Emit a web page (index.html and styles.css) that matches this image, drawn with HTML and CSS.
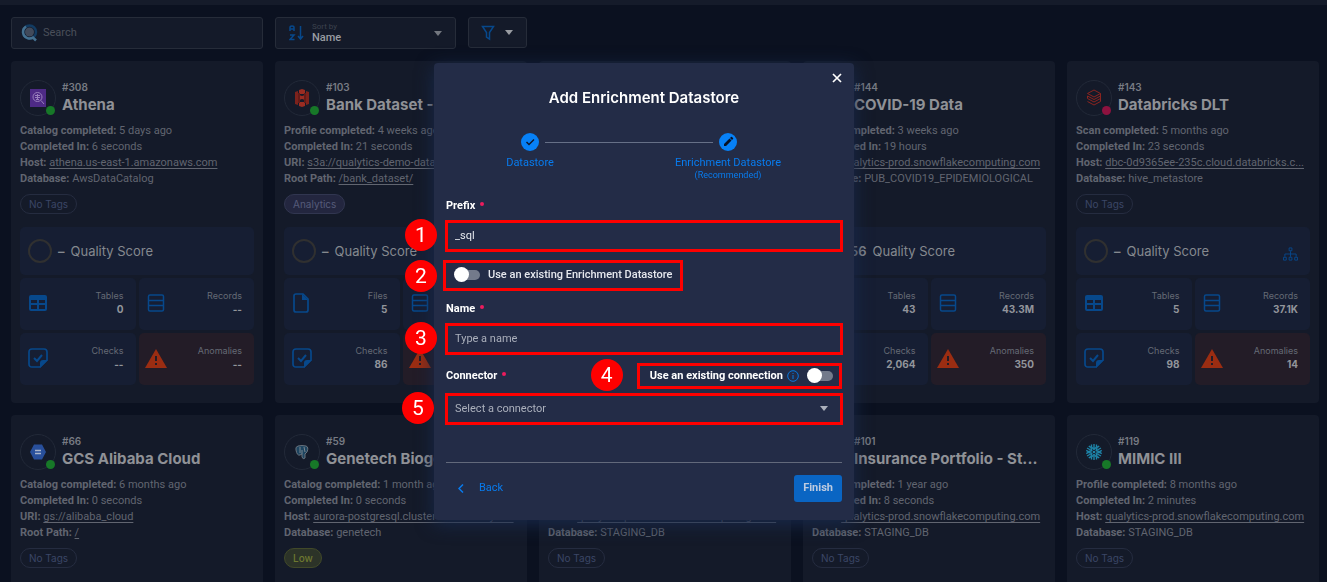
FILE: index.html
```html
<!DOCTYPE html>
<html lang="en">
<head>
<meta charset="utf-8">
<title>Add Enrichment Datastore</title>
<link rel="stylesheet" href="styles.css">
</head>
<body>
<svg class="defs" aria-hidden="true">
  <symbol id="table" viewBox="0 0 20 18"><path fill="currentColor" fill-rule="evenodd" d="M3 1h14a2 2 0 0 1 2 2v12a2 2 0 0 1-2 2H3a2 2 0 0 1-2-2V3a2 2 0 0 1 2-2zM3 6v3h6V6zm8 0v3h6V6zM3 11v4h6v-4zm8 0v4h6v-4z"/></symbol>
  <symbol id="rows" viewBox="0 0 20 20"><path fill="none" stroke="currentColor" stroke-width="1.500" d="M3 2h12q1.500 0 1.500 1.500v13q0 1.500-1.500 1.500H3q-1.500 0-1.500-1.500v-13Q1.500 2 3 2zM1.500 7.500h15M1.500 12.500h15"/></symbol>
  <symbol id="file" viewBox="0 0 20 20"><path fill="none" stroke="currentColor" stroke-width="1.700" d="M4 1h7l5 5v11q0 2-2 2H4q-2 0-2-2V3q0-2 2-2z"/><path fill="currentColor" d="M10 1l6 6h-6z"/></symbol>
  <symbol id="check" viewBox="0 0 20 20"><path fill="none" stroke="currentColor" stroke-width="1.700" d="M4 1h12q3 0 3 3v8l-7 7H4q-3 0-3-3V4q0-3 3-3z"/><path fill="currentColor" d="M12 20v-5q0-3 3-3h5z"/><path fill="none" stroke="currentColor" stroke-width="2" d="M6 10l3 3 5-6"/></symbol>
  <symbol id="warn" viewBox="0 0 22 19"><path fill="currentColor" d="M11 0l11 19H0z"/><path stroke="#231c27" stroke-width="2" d="M11 7v5M11 14v2"/></symbol>
  <symbol id="tree" viewBox="0 0 16 14"><path fill="none" stroke="currentColor" d="M6.500.5h3v3h-3zM.5 10.500h3v3h-3zM6.500 10.500h3v3h-3zM12.500 10.500h3v3h-3zM8 4v6M2 10V7h12v3"/></symbol>
  <symbol id="snow" viewBox="0 0 18 18"><g fill="none" stroke="#1e84a8" stroke-width="1.400"><path d="M9 8L10 9 9 10 8 9z" stroke-width="1"/><g id="arm"><path d="M9 1v4M6.500 1.500v2.500L9 6.500 11.500 4V1.500"/></g><use href="#arm" transform="rotate(60 9 9)"/><use href="#arm" transform="rotate(120 9 9)"/><use href="#arm" transform="rotate(180 9 9)"/><use href="#arm" transform="rotate(240 9 9)"/><use href="#arm" transform="rotate(300 9 9)"/></g></symbol>
</svg>

<header class="topbar"></header>
<main class="page">
  <div class="toolbar">
    <label class="search">
      <svg width="18" height="20" viewBox="0 0 18 20"><circle cx="8.500" cy="9" r="4.500" fill="#414a5b"/><circle cx="8.500" cy="9" r="6.500" fill="none" stroke="#123b62" stroke-width="2.500"/><path d="M5 3.500a6.500 6.500 0 1 0 7 11l3 3" fill="none" stroke="#45708f" stroke-width="2.500"/></svg>
      <input type="search" placeholder="Search" aria-label="Search">
    </label>
    <div class="sort">
      <svg width="15" height="16" viewBox="0 0 15 16" fill="none" stroke="#07488b" stroke-width="1.500"><path d="M1 6V2.500Q1 1 3 1t2 1.500V6M1 4h4M1 10h4L1 14.500h4.500M11.500 1v12M9 11l2.500 3 2.500-3"/></svg>
      <div class="sort-text"><label for="sort">Sort by</label><select id="sort"><option>Name</option></select></div>
      <i class="caret"></i>
    </div>
    <button class="filter" aria-label="Filter"><svg width="14" height="16" viewBox="0 0 14 16" fill="none" stroke="#07488b" stroke-width="1.500"><path d="M1.500 1.500h11L8.500 7.500v6.500l-3-2V7.500z"/></svg><i class="caret"></i></button>
  </div>

  <div class="grid">
    <article class="card">
      <div class="head"><div class="logo"><svg width="16" height="18" viewBox="0 0 16 18"><path fill="#4e2a86" d="M0 0h16v18H0z"/><g fill="none" stroke="#9a80bd"><circle cx="7.500" cy="8" r="4.500"/><path d="M5 6.500h5M5 8.500h5M6 10.500h3M7.500 5v6M11 11.500l3 3.500" /></g></svg><span class="dot"></span></div><div class="name"><small>#308</small><h2>Athena</h2></div></div>
      <div class="meta"><p><b>Catalog completed:</b> 5 days ago</p><p><b>Completed In:</b> 6 seconds</p><p><b>Host:</b> <a href="#">athena.us-east-1.amazonaws.com</a></p><p><b>Database:</b> AwsDataCatalog</p></div>
      <span class="chip">No Tags</span>
      <div class="quality"><i class="ring"></i><span class="score">–</span><span>Quality Score</span></div>
      <div class="stats">
        <div class="stat"><svg width="20" height="18"><use href="#table"/></svg><div><span>Tables</span><b>0</b></div></div>
        <div class="stat"><svg width="20" height="20"><use href="#rows"/></svg><div><span>Records</span><b>--</b></div></div>
        <div class="stat"><svg width="20" height="20"><use href="#check"/></svg><div><span>Checks</span><b>--</b></div></div>
        <div class="stat alert"><svg width="22" height="19"><use href="#warn"/></svg><div><span>Anomalies</span><b>--</b></div></div>
      </div>
    </article>
    <article class="card">
      <div class="head"><div class="logo"><svg width="16" height="20" viewBox="0 0 16 20"><path fill="#7d221c" d="M1 4l3-1v14l-3-1zM12 3l3 1v12l-3 1z"/><path fill="#9a2c22" d="M5 2l3-1 3 1v4H5zM5 7l3 1 3-1v5l-3-1-3 1zM5 14h6v4l-3 1-3-1z"/><path fill="#641b18" d="M4 5h2v10H4zM10 5h2v10h-2z"/></svg><span class="dot"></span></div><div class="name"><small>#103</small><h2>Bank Dataset - S3</h2></div></div>
      <div class="meta"><p><b>Profile completed:</b> 4 weeks ago</p><p><b>Completed In:</b> 21 seconds</p><p><b>URI:</b> <a href="#">s3a://qualytics-demo-data</a></p><p><b>Root Path:</b> <a href="#">/bank_dataset/</a></p></div>
      <span class="chip analytics">Analytics</span>
      <div class="quality"><i class="ring"></i><span class="score">–</span><span>Quality Score</span></div>
      <div class="stats">
        <div class="stat"><svg width="20" height="20"><use href="#file"/></svg><div><span>Files</span><b>5</b></div></div>
        <div class="stat"><svg width="20" height="20"><use href="#rows"/></svg></div>
        <div class="stat"><svg width="20" height="20"><use href="#check"/></svg><div><span>Checks</span><b>86</b></div></div>
        <div class="stat alert"><svg width="22" height="19"><use href="#warn"/></svg></div>
      </div>
    </article>
    <article class="card"></article>
    <article class="card">
      <div class="head"><div class="logo"><span class="dot"></span></div><div class="name"><small>#144</small><h2>COVID-19 Data</h2></div></div>
      <div class="meta"><p><b>Scan completed:</b> 3 weeks ago</p><p><b>Completed In:</b> 19 hours</p><p><b>Host:</b> <a href="#">qualytics-prod.snowflakecomputing.com</a></p><p><b>Database:</b> PUB_COVID19_EPIDEMIOLOGICAL</p></div>
      <span class="chip hidden">Tag</span>
      <div class="quality"><i class="ring"></i><span class="score">56</span><span>Quality Score</span></div>
      <div class="stats">
        <div class="stat"><svg width="20" height="18"><use href="#table"/></svg><div><span>Tables</span><b>43</b></div></div>
        <div class="stat"><svg width="20" height="20"><use href="#rows"/></svg><div><span>Records</span><b>43.3M</b></div></div>
        <div class="stat"><svg width="20" height="20"><use href="#check"/></svg><div><span>Checks</span><b>2,064</b></div></div>
        <div class="stat alert"><svg width="22" height="19"><use href="#warn"/></svg><div><span>Anomalies</span><b>350</b></div></div>
      </div>
    </article>
    <article class="card">
      <div class="head"><div class="logo"><svg width="16" height="18" viewBox="0 0 16 18" fill="none" stroke="#8b241f"><path d="M8 1l6.500 3.500L8 8 1.500 4.500zM1.500 7L8 10.500 14.500 7M1.500 9.500L8 13l6.500-3.500M1.500 12.500L8 16l6.500-3.500M1.500 7v2.500M14.500 4.500v8"/></svg><span class="dot red"></span></div><div class="name"><small>#143</small><h2>Databricks DLT</h2></div></div>
      <div class="meta"><p><b>Scan completed:</b> 5 months ago</p><p><b>Completed In:</b> 23 seconds</p><p><b>Host:</b> <a href="#">dbc-0d9365ee-235c.cloud.databricks.c...</a></p><p><b>Database:</b> hive_metastore</p></div>
      <span class="chip">No Tags</span>
      <div class="quality"><i class="ring"></i><span class="score">–</span><span>Quality Score</span><svg class="tree" width="15" height="14"><use href="#tree"/></svg></div>
      <div class="stats">
        <div class="stat"><svg width="20" height="18"><use href="#table"/></svg><div><span>Tables</span><b>5</b></div></div>
        <div class="stat"><svg width="20" height="20"><use href="#rows"/></svg><div><span>Records</span><b>37.1K</b></div></div>
        <div class="stat"><svg width="20" height="20"><use href="#check"/></svg><div><span>Checks</span><b>98</b></div></div>
        <div class="stat alert"><svg width="22" height="19"><use href="#warn"/></svg><div><span>Anomalies</span><b>14</b></div></div>
      </div>
    </article>

    <article class="card">
      <div class="head"><div class="logo"><svg width="16" height="16" viewBox="0 0 16 16"><path fill="#284f9b" d="M4 .5h8L16 8l-4 7.500H4L0 8z"/><path stroke="#a9b5cb" stroke-width="1.500" d="M5 6.500h6M5 9.500h6"/></svg><span class="dot"></span></div><div class="name"><small>#66</small><h2>GCS Alibaba Cloud</h2></div></div>
      <div class="meta"><p><b>Catalog completed:</b> 6 months ago</p><p><b>Completed In:</b> 0 seconds</p><p><b>URI:</b> <a href="#">gs://alibaba_cloud</a></p><p><b>Root Path:</b> <a href="#">/</a></p></div>
      <span class="chip">No Tags</span>
    </article>
    <article class="card">
      <div class="head"><div class="logo"><svg width="14" height="15" viewBox="0 0 14 15"><path d="M3 1q4-1 8 0 3 1 1 6l-2 2v4q-2 2-3-1V9L5 10Q2 11 1 5 0 2 3 1z" fill="#1d4460" stroke="#69737d"/><path d="M5 2v6M9 2l1 5M7 9V5" fill="none" stroke="#7b858d"/></svg><span class="dot"></span></div><div class="name"><small>#59</small><h2>Genetech Biogen</h2></div></div>
      <div class="meta"><p><b>Catalog completed:</b> 1 month ago</p><p><b>Completed In:</b> 0 seconds</p><p><b>Host:</b> <a href="#">aurora-postgresql.cluster-cthoaoxeayrd...</a></p><p><b>Database:</b> genetech</p></div>
      <span class="chip low">Low</span>
    </article>
    <article class="card">
      <div class="head"><div class="logo"></div></div>
      <div class="meta"><p>&nbsp;</p><p>&nbsp;</p><p><b>Host:</b> <a href="#">qualytics-prod.snowflakecomputing.com</a></p><p><b>Database:</b> STAGING_DB</p></div>
      <span class="chip">No Tags</span>
    </article>
    <article class="card">
      <div class="head"><div class="logo"><span class="dot"></span></div><div class="name"><small>#101</small><h2>Insurance Portfolio - St...</h2></div></div>
      <div class="meta"><p><b>Scan completed:</b> 1 year ago</p><p><b>Completed In:</b> 8 seconds</p><p><b>Host:</b> <a href="#">qualytics-prod.snowflakecomputing.com</a></p><p><b>Database:</b> STAGING_DB</p></div>
      <span class="chip">No Tags</span>
    </article>
    <article class="card">
      <div class="head"><div class="logo"><svg width="18" height="18"><use href="#snow"/></svg><span class="dot"></span></div><div class="name"><small>#119</small><h2>MIMIC III</h2></div></div>
      <div class="meta"><p><b>Profile completed:</b> 8 months ago</p><p><b>Completed In:</b> 2 minutes</p><p><b>Host:</b> <a href="#">qualytics-prod.snowflakecomputing.com</a></p><p><b>Database:</b> STAGING_DB</p></div>
      <span class="chip">No Tags</span>
    </article>
  </div>
</main>

<div class="overlay">
  <form class="modal" role="dialog" aria-labelledby="title">
    <button type="button" class="close" aria-label="Close"><svg width="10" height="10" viewBox="0 0 10 10"><path d="M1 1l8 8M9 1L1 9" stroke="#fff" stroke-width="1.700"/></svg></button>
    <h1 id="title">Add Enrichment Datastore</h1>
    <div class="steps">
      <div class="step"><svg width="18" height="18" viewBox="0 0 18 18"><circle cx="9" cy="9" r="9" fill="#0781f7"/><path d="M5.500 9l2.500 2.500 5-5" fill="none" stroke="#10182c" stroke-width="1.500"/></svg><span>Datastore</span></div>
      <div class="step"><svg width="18" height="18" viewBox="0 0 18 18"><circle cx="9" cy="9" r="9" fill="#0781f7"/><path d="M5 13v-2l5.500-5.500 2 2L7 13zM11 5l1-1q.5-.5 1 0l1 1q.5.5 0 1l-1 1z" fill="#071226"/></svg><span>Enrichment Datastore</span><small>(Recommended)</small></div>
    </div>
    <label class="label" for="prefix">Prefix<i></i></label>
    <div class="field"><input id="prefix" type="text" value="_sql"><em class="mark">1</em></div>
    <div class="existing"><label><input class="toggle" type="checkbox">Use an existing Enrichment Datastore</label><em class="mark">2</em></div>
    <label class="label" for="dsname">Name<i></i></label>
    <div class="field"><input id="dsname" type="text" placeholder="Type a name"><em class="mark">3</em></div>
    <div class="connector">
      <label class="label" for="connector">Connector<i></i></label>
      <div class="connection"><label for="conn">Use an existing connection</label><svg width="12" height="12" viewBox="0 0 12 12" fill="none" stroke="#0878df"><circle cx="6" cy="6" r="5.300"/><path d="M6 5v4M6 3v1"/></svg><input id="conn" class="toggle" type="checkbox"><em class="mark">4</em></div>
    </div>
    <div class="field"><select id="connector"><option>Select a connector</option></select><i class="caret"></i><em class="mark five">5</em></div>
    <footer><button type="button" class="back"><svg width="6" height="9" viewBox="0 0 6 9"><path d="M5 .5l-4 4 4 4" fill="none" stroke="currentColor" stroke-width="1.500"/></svg>Back</button><button type="button" class="finish">Finish</button></footer>
  </form>
</div>
</body>
</html>
```
FILE: styles.css
```css
* { box-sizing: border-box; }
body { margin: 0; display: flex; flex-direction: column; height: 100vh; overflow: hidden; background: #0b1120; color: #616570; font: 11px/16px Roboto, "Liberation Sans", sans-serif; }
h1, h2, p { margin: 0; }
button, input, select { font: inherit; color: inherit; background: none; border: 0; padding: 0; margin: 0; appearance: none; outline: 0; }
svg { display: block; flex: none; }
.defs { position: absolute; width: 0; height: 0; }
.topbar { flex: none; height: 5px; background: #151b2a; }
.page { flex: 1; min-height: 0; overflow: hidden; padding: 12px 8px 0 11px; }
.toolbar { display: flex; gap: 12px; align-items: flex-start; height: 44px; }
.search, .sort, .filter { display: flex; align-items: center; height: 32px; background: #141a29; border: 1px solid #262c39; border-radius: 3px; }
.search { width: 252px; padding: 0 9px; gap: 4px; }
.search input { flex: 1; min-width: 0; }
.search input::placeholder { color: #4a4f5a; opacity: 1; }
.sort { position: relative; width: 181px; padding: 0 13px; gap: 8px; }
.sort-text { flex: 1; display: flex; flex-direction: column; }
.sort-text label { font-size: 8px; line-height: 9px; color: #3c424e; }
.sort-text select { color: #999ca2; font-weight: 500; line-height: 14px; height: 14px; }
.caret { flex: none; border: 4px solid transparent; border-top: 5px solid #73777f; border-bottom: 0; }
.filter { width: 59px; height: 31px; padding: 0 12px; gap: 10px; }
.filter .caret { border-top-color: #999ca2; }

.grid { display: grid; grid-template-columns: repeat(5, minmax(0, 1fr)); gap: 12px; }
.card { min-height: 342px; padding: 19px 9px 18px; background: #141a29; border-radius: 4px; }
.head { display: flex; gap: 6px; height: 43px; }
.logo { position: relative; display: grid; place-items: center; width: 36px; height: 36px; border: 1px solid #222938; border-radius: 50%; }
.dot { position: absolute; right: 0; bottom: 0; width: 9px; height: 9px; border-radius: 50%; background: #177828; }
.dot.red { background: #8e123f; }
.name { min-width: 0; white-space: nowrap; font-family: Inter, sans-serif; }
.name small { display: block; font-size: 10px; font-weight: 600; line-height: 14px; color: #777b83; }
.name h2 { font-size: 15px; line-height: 22px; font-weight: 700; color: #8f9196; }
.meta { margin-bottom: 7px; }
.meta p { white-space: nowrap; }
.meta b { font-weight: 700; }
.meta a { color: inherit; text-underline-offset: 2px; }
.chip { display: inline-flex; align-items: center; height: 20px; padding: 0 8px; border: 1px solid #252c40; border-radius: 10px; color: #3b4666; font: 10px/16px Inter, sans-serif; vertical-align: top; }
.chip.analytics { background: #23263f; border-color: #313650; color: #565b7a; }
.chip.low { background: #2c3328; border-color: #414929; color: #6d7830; font-weight: 500; }
.chip.hidden { visibility: hidden; }
.quality { display: flex; align-items: center; height: 48px; margin-top: 13px; padding: 0 12px 0 8px; border-radius: 5px; background: #161e33; color: #85898f; font: 13px/16px Inter, sans-serif; }
.ring { width: 24px; height: 24px; margin-right: 6px; border: 2px solid #303030; border-radius: 50%; }
.score { margin-right: 6px; font-weight: 600; }
.tree { margin-left: auto; margin-top: 6px; color: #07488b; }
.stats { display: grid; grid-template-columns: 1fr 1fr; gap: 3px; margin-top: 3px; font-family: Inter, sans-serif; }
.stat { display: flex; align-items: center; justify-content: space-between; height: 52px; padding: 0 12px 2px 8px; border-radius: 5px; background: #161e33; color: #07488b; }
.stat div { text-align: right; }
.stat span { display: block; color: #656a75; font-size: 9px; line-height: 12px; }
.stat b { display: block; color: #92959b; font-size: 10px; line-height: 14px; }
.stat.alert { background: #231c27; color: #9b2d12; padding-left: 6px; }

.overlay { position: fixed; inset: 0; display: flex; align-items: center; justify-content: center; padding-right: 39px; }
.modal { position: relative; width: 420px; padding: 24px 12px 18px; border-radius: 4px; background: #232c47; color: #e6e8ee; box-shadow: 0 4px 18px #17294b; }
.close { position: absolute; right: 12px; top: 10px; }
h1 { color: #fff; font: 600 15px/22px Inter, sans-serif; text-align: center; }
.steps { position: relative; display: flex; height: 67px; margin: 0 15px 0 -15px; padding-top: 24px; }
.steps::after { content: ""; position: absolute; left: 25%; right: 25%; top: 33px; margin: 0 15px; height: 1px; background: #667087; }
.step { flex: 1; display: flex; flex-direction: column; align-items: center; color: #087bed; line-height: 14px; }
.step svg { margin-bottom: 5px; }
.step small { font-size: 9px; line-height: 11px; }
.label { display: flex; align-items: center; gap: 5px; color: #fff; font-weight: 700; }
.label i { width: 4px; height: 4px; margin-bottom: 4px; border-radius: 50%; background: #ed1c5d; }
.steps + .label { margin-top: 22px; }
.field { position: relative; display: flex; align-items: center; height: 32px; margin: 6px -1px 0; border: 3px solid #fe0000; }
.field input, .field select { flex: 1; width: 100%; height: 100%; padding: 0 7px; }
.field input::placeholder, .field select { color: #abb0bc; opacity: 1; }
.field .caret { position: absolute; right: 12px; border-top-color: #abb0bc; }
.mark { position: absolute; right: calc(100% + 11px); top: 50%; width: 32px; height: 32px; margin-top: -17px; border-radius: 50%; background: #fe0000; color: #fff; font: 21px/32px Roboto, sans-serif; text-align: center; }
.existing { position: relative; width: max-content; height: 31px; margin: 8px 0 10px -3px; padding: 0 8px; border: 3px solid #fe0000; font-weight: 500; }
.existing label { display: flex; align-items: center; gap: 8px; height: 25px; }
.existing .mark { right: calc(100% + 9px); margin-top: -15px; }
.toggle { position: relative; width: 26px; height: 16px; }
.toggle::before { content: ""; position: absolute; left: 3px; top: 3px; width: 23px; height: 10px; border-radius: 5px; background: #737a8b; }
.toggle::after { content: ""; position: absolute; left: 0; top: 0; width: 15px; height: 15px; border-radius: 50%; background: #fff; }
.connector { display: flex; align-items: center; justify-content: space-between; margin-top: 8px; }
.connection { position: relative; display: flex; align-items: center; height: 26px; padding: 0 6px 0 10px; border: 3px solid #fe0000; color: #fff; font-weight: 700; }
.connection label { margin-right: 4px; }
.connection .toggle { margin-left: 8px; }
.connection .mark { right: calc(100% + 17px); }
.connector + .field { margin-top: 4px; }
.field .mark.five { right: calc(100% + 14px); }
footer { display: flex; justify-content: space-between; align-items: center; margin-top: 37px; padding-top: 12px; border-top: 1px solid #62697b; }
.back { display: flex; align-items: center; gap: 15px; padding-left: 12px; color: #087bed; }
.finish { height: 27px; padding: 0 9px; border-radius: 3px; background: #0a65c3; color: #bdcbe0; font-weight: 700; }
```
